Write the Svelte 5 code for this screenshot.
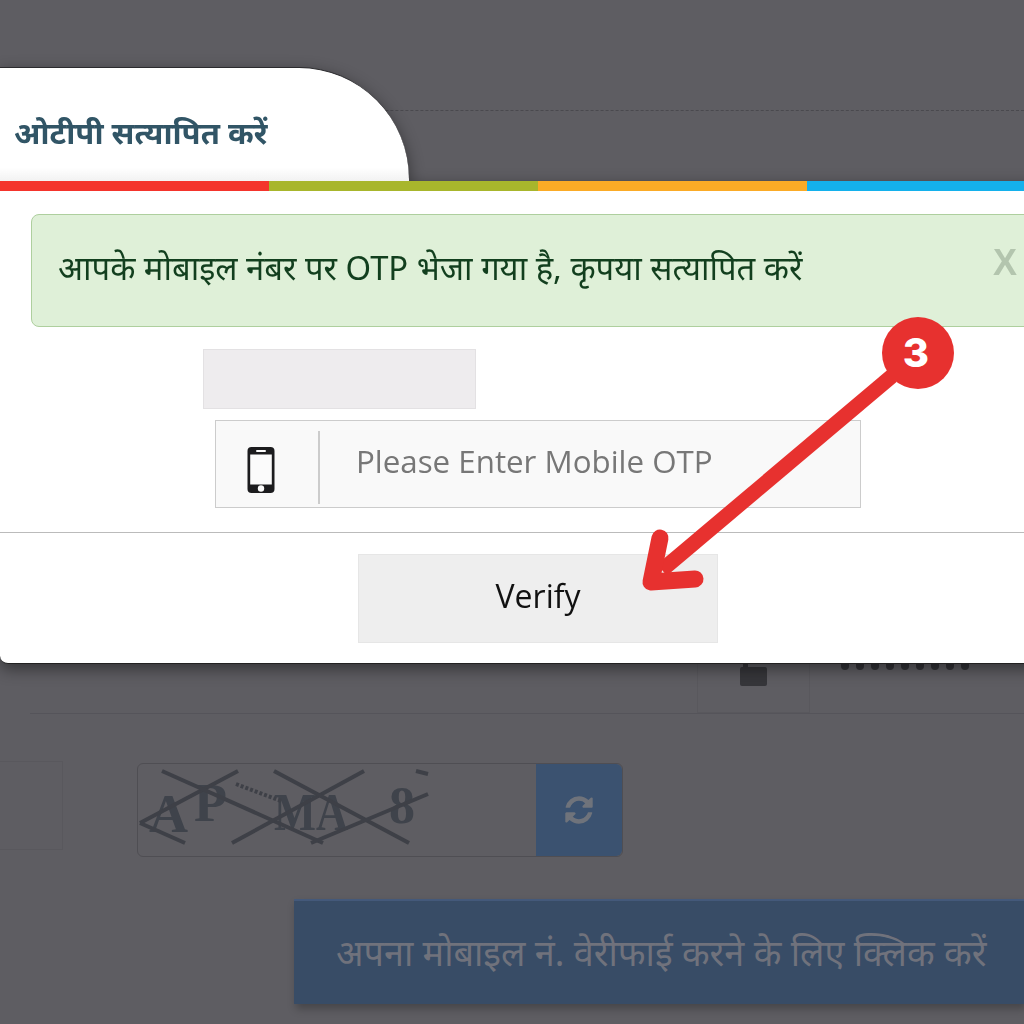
<script>
  const stripes = ['#f4342c', '#a8b62c', '#fbab26', '#14b1ec'];
  const dots = Array(9).fill(0);
</script>

<div class="page">
  <div class="dash-line"></div>

  <div class="pass-row">
    <div class="lock-cell"><span class="lock"></span></div>
    <div class="pass-input">
      {#each dots as _}
        <span class="dot"></span>
      {/each}
    </div>
  </div>

  <div class="captcha-row">
    <div class="captcha-input"></div>
    <div class="captcha">
      <svg class="captcha-img" width="300" height="94" viewBox="0 0 300 94">
        <g class="glyphs">
          <text x="11" y="68" font-size="54">A</text>
          <text x="56" y="57" font-size="54">P</text>
          <text x="136" y="66" font-size="52" textLength="74" lengthAdjust="spacingAndGlyphs">MA</text>
          <text x="251" y="59" font-size="52">8</text>
        </g>
        <g class="noise">
          <path d="M2 59 100 7" />
          <path d="M24 7 185 79" />
          <path d="M94 79 226 7" />
          <path d="M136 7 271 79" />
          <path d="M2 59 47 79" />
          <path d="M173 79 290 30" />
          <path d="M278 7 290 10" />
          <path d="M98 20 143 37" stroke-dasharray="3 2" />
        </g>
      </svg>
      <div class="refresh">
        <svg width="32" height="32" viewBox="0 0 1792 1792">
          <path fill="#6f737b" d="M1639 1056q0 5-1 7-64 268-268 434.500t-478 166.500q-146 0-282.500-55t-243.500-157l-129 129q-19 19-45 19t-45-19-19-45v-448q0-26 19-45t45-19h448q26 0 45 19t19 45-19 45l-137 137q71 66 161 102t187 36q134 0 250-65t186-179q11-17 53-117 8-23 30-23h192q13 0 22.500 9.500t9.500 22.500zm25-800v448q0 26-19 45t-45 19h-448q-26 0-45-19t-19-45 19-45l138-138q-148-137-349-137-134 0-250 65t-186 179q-11 17-53 117-8 23-30 23h-199q-13 0-22.500-9.500t-9.500-22.500v-7q65-268 270-434.500t480-166.500q146 0 284 55.500t245 156.500l130-129q19-19 45-19t45 19 19 45z" />
        </svg>
      </div>
    </div>
  </div>

  <div class="submit">अपना मोबाइल नं. वेरीफाई करने के लिए क्लिक करें</div>
</div>

<div class="modal">
  <div class="tab">
    <h4>ओटीपी सत्यापित करें</h4>
  </div>
  <div class="stripes">
    {#each stripes as color}
      <span style="background: {color}"></span>
    {/each}
  </div>
  <div class="modal-body">
    <div class="alert">
      <span>आपके मोबाइल नंबर पर OTP भेजा गया है, कृपया सत्यापित करें</span>
      <span class="close">X</span>
    </div>
    <div class="blank-box"></div>
    <div class="otp-input">
      <div class="otp-icon">
        <svg width="28" height="46" viewBox="0 0 28 46">
          <rect x="0.500" y="0" width="27" height="46" rx="4" fill="#1c1c1e" />
          <rect x="3.200" y="7.500" width="21.600" height="30" fill="#fbfbfb" />
          <rect x="9" y="3" width="10" height="2" rx="1" fill="#fbfbfb" />
          <circle cx="14" cy="41.500" r="3.200" fill="#fbfbfb" />
        </svg>
      </div>
      <div class="otp-placeholder">Please Enter Mobile OTP</div>
    </div>
  </div>
  <div class="modal-footer">
    <div class="verify">Verify</div>
  </div>
</div>

<svg class="callout" width="1024" height="1024" viewBox="0 0 1024 1024">
  <path class="shaft" d="M892 376 662 570" />
  <path class="head" d="M660 538 651 582 695 579" />
  <circle cx="918" cy="353" r="36" fill="#e7312f" />
  <text x="916" y="367" text-anchor="middle">3</text>
</svg>

<style>
  :global(body) {
    margin: 0;
    background: #5f5e63;
    overflow: hidden;
  }

  .page {
    height: 1024px;
    overflow: hidden;
    background: #5e5d62;
    padding-top: 110px;
    box-sizing: border-box;
    font-family: "Noto Sans", "Open Sans", sans-serif;
  }

  .dash-line {
    border-top: 1px dashed #4a494e;
  }

  .pass-row {
    display: flex;
    margin: 502px 0 0 30px;
    height: 100px;
    border-bottom: 1px solid #55545a;
  }

  .lock-cell {
    box-sizing: border-box;
    width: 113px;
    margin-left: 667px;
    border: 1px solid #59585d;
    border-top: none;
    display: flex;
    justify-content: center;
    padding-top: 54px;
  }

  .lock {
    position: relative;
    width: 27px;
    height: 19px;
    background: #36363a;
    border-radius: 2px;
  }

  .lock::before {
    content: '';
    position: absolute;
    top: -5px;
    left: 3px;
    width: 5px;
    height: 5px;
    background: #36363a;
  }

  .pass-input {
    display: flex;
    gap: 7.500px;
    padding: 47px 0 0 31px;
  }

  .dot {
    width: 7.500px;
    height: 10px;
    border-radius: 4px;
    background: #333337;
  }

  .captcha-row {
    display: flex;
    align-items: flex-start;
    gap: 74px;
    margin-top: 47px;
  }

  .captcha-input {
    width: 63px;
    height: 89px;
    box-sizing: border-box;
    border: 1px solid #59585d;
    border-left: none;
  }

  .captcha {
    display: flex;
    justify-content: space-between;
    box-sizing: border-box;
    width: 486px;
    height: 94px;
    margin-top: 2px;
    border: 1px solid #4f4e53;
    border-radius: 6px;
  }

  .glyphs {
    font-family: "Liberation Serif", serif;
    font-weight: bold;
    fill: #3f434b;
  }

  .noise path {
    stroke: #3e4047;
    stroke-width: 4;
    fill: none;
  }

  .refresh {
    width: 86px;
    display: flex;
    align-items: center;
    justify-content: center;
    background: #3b5270;
    border-radius: 0 6px 6px 0;
  }

  .submit {
    margin: 42px 0 0 294px;
    height: 105px;
    display: flex;
    align-items: center;
    padding: 0 0 0 42px;
    background: #384c66;
    border-top: 2px solid #44597a;
    box-sizing: border-box;
    box-shadow: 2px 5px 8px rgba(0, 0, 0, 0.25);
    color: #70727c;
    font-size: 36px;
    white-space: nowrap;
  }

  .modal {
    position: absolute;
    top: 67px;
    left: 0;
    width: 1076px;
    font-family: "Noto Sans", "Open Sans", sans-serif;
    filter: drop-shadow(0 5px 8px rgba(0, 0, 0, 0.45));
  }

  .tab {
    width: 409px;
    height: 114px;
    box-sizing: border-box;
    border-top: 1px solid #2b2b2e;
    border-top-right-radius: 110px 112px;
    background: linear-gradient(to bottom, #fff 88%, #f2f2f2 100%);
    display: flex;
    align-items: center;
    padding: 14px 0 0 14px;
  }

  .tab h4 {
    margin: 0;
    color: #315566;
    font-size: 31px;
    font-weight: bold;
    white-space: nowrap;
  }

  .stripes {
    display: flex;
    height: 10px;
  }

  .stripes span {
    flex: 1;
  }

  .modal-body {
    background: #fff;
    padding: 23px 30px 0 31px;
    height: 342px;
    box-sizing: border-box;
    border-bottom: 1px solid #bbb;
  }

  .alert {
    display: flex;
    justify-content: space-between;
    align-items: center;
    box-sizing: border-box;
    height: 113px;
    padding: 0 28px 6px 26px;
    background: #dff0d8;
    border: 1px solid #aecf9e;
    border-radius: 8px;
    color: #123f1e;
    font-size: 32.800px;
    white-space: nowrap;
  }

  .close {
    padding-bottom: 10px;
    font-size: 36px;
    font-weight: bold;
    color: #b3c5ae;
    font-family: "Liberation Sans", sans-serif;
  }

  .blank-box {
    width: 273px;
    height: 60px;
    margin: 22px 0 0 172px;
    box-sizing: border-box;
    background: #eeecee;
    border: 1px solid #e3e1e3;
  }

  .otp-input {
    display: flex;
    align-items: center;
    width: 646px;
    height: 88px;
    margin: 11px 0 0 184px;
    box-sizing: border-box;
    background: #f9f9f9;
    border: 1px solid #ccc;
  }

  .otp-icon {
    display: flex;
    align-items: center;
    justify-content: center;
    width: 104px;
    height: 73px;
    margin-top: 7px;
    padding: 4px 12px 0 0;
    box-sizing: border-box;
    border-right: 2px solid #ccc;
  }

  .otp-placeholder {
    padding: 0 0 7px 36px;
    color: #777;
    font-size: 31.300px;
    font-family: "Open Sans", sans-serif;
    white-space: nowrap;
  }

  .modal-footer {
    background: #fff;
    height: 131px;
    padding: 21px 0 0 358px;
    box-sizing: border-box;
    border-bottom-left-radius: 8px;
    border-bottom: 1px solid #222;
  }

  .verify {
    width: 360px;
    height: 89px;
    box-sizing: border-box;
    display: flex;
    align-items: center;
    justify-content: center;
    padding-bottom: 6px;
    background: #eee;
    border: 1px solid #e6e6e6;
    color: #111;
    font-size: 32px;
    font-family: "Open Sans", sans-serif;
  }

  .callout {
    position: absolute;
    top: 0;
    left: 0;
    pointer-events: none;
  }

  .shaft {
    fill: none;
    stroke: #e7312f;
    stroke-width: 15;
  }

  .head {
    fill: none;
    stroke: #e7312f;
    stroke-width: 17;
    stroke-linecap: round;
    stroke-linejoin: round;
  }

  .callout text {
    fill: #fff;
    font-family: "Inter", "Liberation Sans", sans-serif;
    font-weight: 800;
    font-size: 40px;
  }
</style>
